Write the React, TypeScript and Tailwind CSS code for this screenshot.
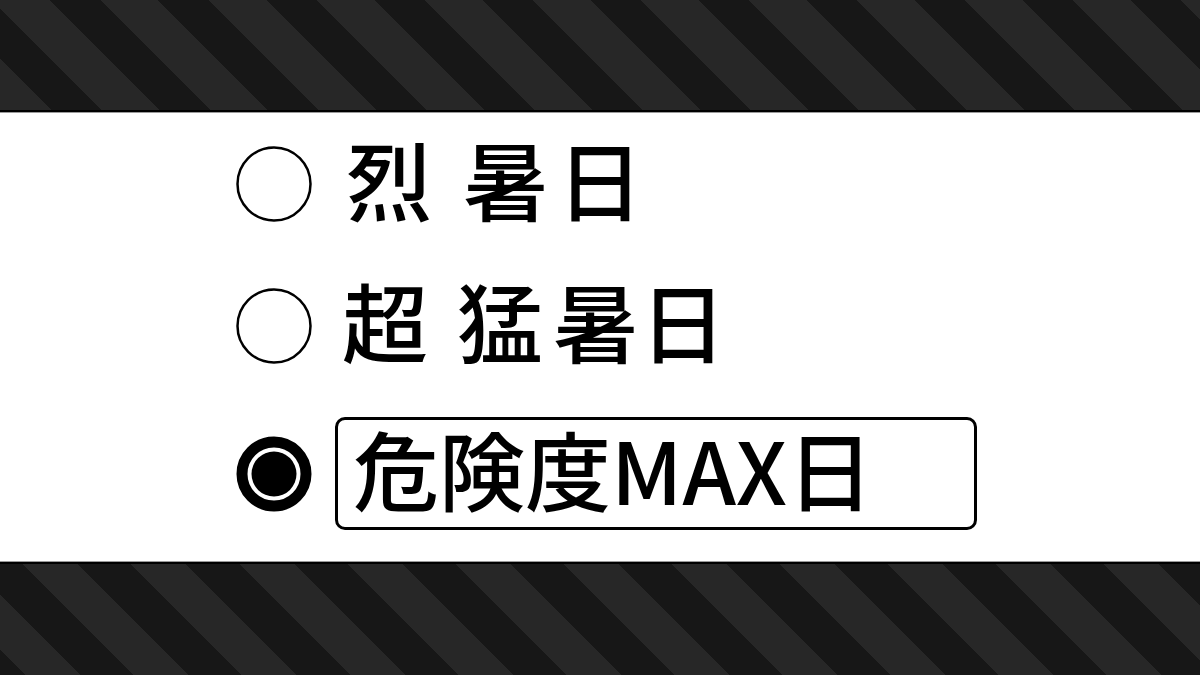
import React from "react";

const jp = { fontFamily: '"Noto Sans CJK JP", "Noto Sans", sans-serif' };

function StripeBand({ bottom }: { bottom?: boolean }) {
  return bottom ? (
    <div className="flex flex-col">
      <div className="h-px bg-[#9a9a9a]" />
      <div className="h-[2px] bg-black" />
      <div className="h-[111px] bg-[repeating-linear-gradient(45deg,#171717_0px,#171717_18.3px,#272727_18.3px,#272727_57.2px,#171717_57.2px,#171717_76.4px)]" />
    </div>
  ) : (
    <div className="flex flex-col">
      <div className="h-[110px] bg-[repeating-linear-gradient(45deg,#272727_0px,#272727_36.7px,#171717_36.7px,#171717_72.1px,#272727_72.1px,#272727_76.4px)]" />
      <div className="h-[2px] bg-black" />
      <div className="h-px bg-[#9a9a9a]" />
    </div>
  );
}

function Radio({ checked }: { checked?: boolean }) {
  return (
    <svg width="76" height="76" viewBox="0 0 76 76" className="shrink-0">
      {checked ? (
        <>
          <circle cx="38" cy="38" r="32" fill="none" stroke="#000" strokeWidth="11" />
          <circle cx="38" cy="38" r="22.5" fill="#000" />
        </>
      ) : (
        <circle cx="38" cy="38" r="36.5" fill="#fff" stroke="#000" strokeWidth="2.5" />
      )}
    </svg>
  );
}

export default function App() {
  return (
    <div className="w-[1200px] h-[675px] flex flex-col bg-white overflow-hidden" style={jp}>
      <StripeBand />

      {/* heat level options */}
      <div className="flex-1 flex flex-col pl-[236px] pt-[14px] text-black font-medium text-[86px] leading-none">
        <label className="flex items-center gap-[23px] h-[113px]">
          <Radio />
          <span className="flex pb-[12px]">
            <span className="w-[86px] text-center ml-[11px]">烈</span>
            <span className="w-[86px] text-center ml-[31px]">暑</span>
            <span className="w-[86px] text-center ml-[8px]">日</span>
          </span>
        </label>

        <label className="flex items-center gap-[23px] h-[113px] mt-[29px]">
          <Radio />
          <span className="flex pb-[12px]">
            <span className="w-[86px] text-center ml-[7px]">超</span>
            <span className="w-[86px] text-center ml-[29px]">猛</span>
            <span className="w-[86px] text-center ml-[10px]">暑</span>
            <span className="w-[86px] text-center ml-[1px]">日</span>
          </span>
        </label>

        <label className="flex items-center gap-[23px] h-[113px] mt-[35px]">
          <Radio checked />
          <span className="flex items-center w-[642px] h-[113px] border-[3px] border-black rounded-[10px] pl-[15px] pb-[12px]">
            危険度MAX日
          </span>
        </label>
      </div>

      <StripeBand bottom />
    </div>
  );
}
